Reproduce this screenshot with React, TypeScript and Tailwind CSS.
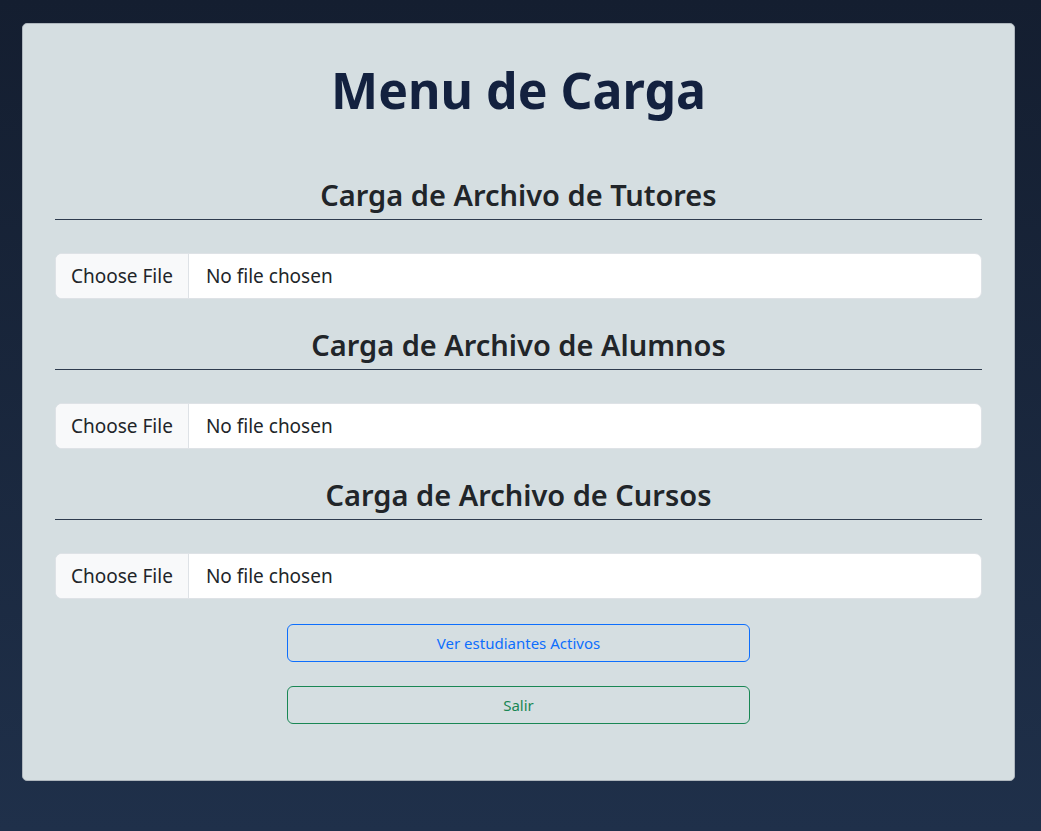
import React from "react";

const font = { fontFamily: '"Noto Sans", "Open Sans", sans-serif' };

function FileRow() {
  return (
    <div className="flex h-[46px] w-full overflow-hidden rounded-[7px] border border-[#dee2e6] bg-white text-[19px] text-[#212529]">
      <div className="flex items-center border-r border-[#dee2e6] bg-[#f8f9fa] px-[15px]">Choose File</div>
      <div className="flex items-center px-[17px]">No file chosen</div>
    </div>
  );
}

function Section({ title, first }: { title: string; first?: boolean }) {
  return (
    <div className={first ? "mt-[59px]" : "mt-[29px]"}>
      <h3 className="text-center text-[29px] font-semibold leading-[34px] text-[#212529]">{title}</h3>
      <hr className="mt-[7px] border-t border-[#2e3b4e]" />
      <div className="mt-[33px]">
        <FileRow />
      </div>
    </div>
  );
}

export default function App() {
  return (
    <div className="min-h-screen bg-gradient-to-b from-[#141e30] to-[#1f304a] pt-[23px] pl-[22px]" style={font}>
      <div className="w-[993px] rounded-[5px] border border-[#aeb6bd] bg-[#d5dee1] px-[32px] pt-[37px] pb-[56px]">
        <h1 className="text-center text-[50px] font-bold leading-[58px] text-[#13213f]">Menu de Carga</h1>
        <Section title="Carga de Archivo de Tutores" first />
        <Section title="Carga de Archivo de Alumnos" />
        <Section title="Carga de Archivo de Cursos" />
        <div className="mt-[25px] flex flex-col items-center gap-[24px]">
          <button className="h-[38px] w-[463px] rounded-[6px] border border-[#0d6efd] text-[15px] text-[#0d6efd]">Ver estudiantes Activos</button>
          <button className="h-[38px] w-[463px] rounded-[6px] border border-[#198754] text-[15px] text-[#198754]">Salir</button>
        </div>
      </div>
    </div>
  );
}
